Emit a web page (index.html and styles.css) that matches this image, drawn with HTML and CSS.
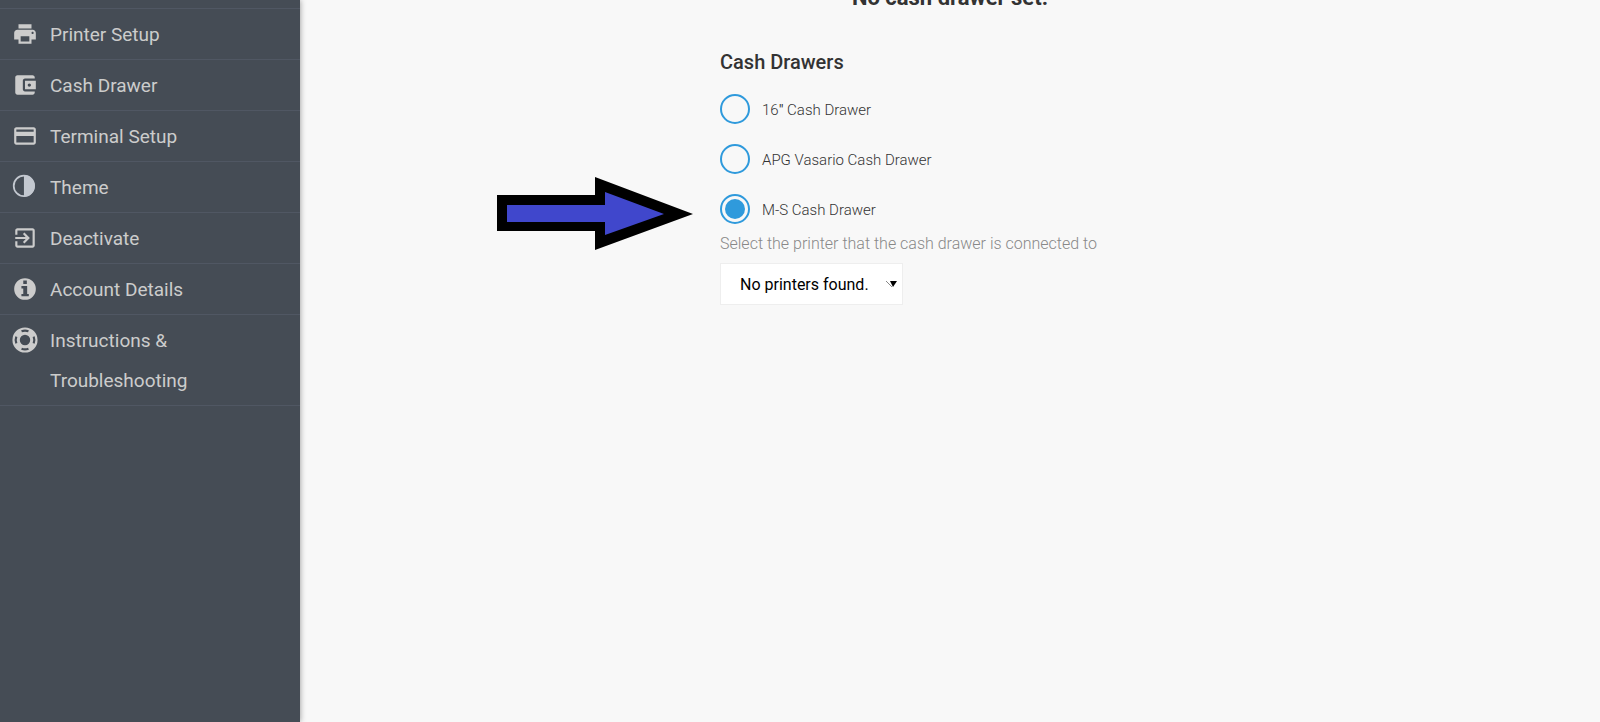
FILE: index.html
```
<!DOCTYPE html>
<html lang="en">
<head>
<meta charset="utf-8">
<title>Cash Drawer</title>
<link rel="stylesheet" href="styles.css">
</head>
<body>
<div class="app">
  <nav class="sidebar">
    <ul class="menu">
      <li><a class="menu-link" href="#printer">
        <svg class="icon" viewBox="0 0 24 24"><path d="M19 8H5c-1.660 0-3 1.340-3 3v6h4v4h12v-4h4v-6c0-1.660-1.340-3-3-3zm-3 11H8v-5h8v5zm3-7c-.55 0-1-.45-1-1s.45-1 1-1 1 .45 1 1-.45 1-1 1zm-1-9H6v4h12V3z"/></svg>
        <span>Printer Setup</span></a></li>
      <li><a class="menu-link" href="#drawer">
        <svg class="icon" viewBox="0 0 24 24"><path d="M21 18v1c0 1.100-.9 2-2 2H5c-1.110 0-2-.9-2-2V5c0-1.100.89-2 2-2h14c1.100 0 2 .9 2 2v1h-9c-1.110 0-2 .9-2 2v8c0 1.100.89 2 2 2h9zm-9-2h10V8H12v8zm4-2.500c-.83 0-1.500-.67-1.500-1.500s.67-1.500 1.500-1.500 1.500.67 1.500 1.500-.67 1.500-1.500 1.500z"/></svg>
        <span>Cash Drawer</span></a></li>
      <li><a class="menu-link" href="#terminal">
        <svg class="icon" viewBox="0 0 24 24"><path d="M20 4H4c-1.110 0-1.990.89-1.990 2L2 18c0 1.110.89 2 2 2h16c1.110 0 2-.89 2-2V6c0-1.110-.89-2-2-2zm0 14H4v-6h16v6zm0-10H4V6h16v2z"/></svg>
        <span>Terminal Setup</span></a></li>
      <li><a class="menu-link" href="#theme">
        <svg class="icon icon-theme" viewBox="0 0 24 24"><circle cx="11" cy="11" r="9.400" fill="none" stroke="currentColor" stroke-width="1.600"/><path d="M11 1a10 10 0 0 1 0 20z"/></svg>
        <span>Theme</span></a></li>
      <li><a class="menu-link" href="#deactivate">
        <svg class="icon" viewBox="0 0 24 24"><path d="M10.090 15.590L11.500 17l5-5-5-5-1.410 1.410L12.670 11H3v2h9.670l-2.580 2.590zM19 3H5c-1.110 0-2 .9-2 2v4h2V5h14v14H5v-4H3v4c0 1.100.89 2 2 2h14c1.100 0 2-.9 2-2V5c0-1.100-.9-2-2-2z"/></svg>
        <span>Deactivate</span></a></li>
      <li><a class="menu-link" href="#account">
        <svg class="icon" viewBox="0 0 24 24"><path fill-rule="evenodd" d="M12 2a10 10 0 1 0 0 20a10 10 0 0 0 0-20zM10.400 4.200h3.300v3.200h-3.300zM8.700 9.300H14v7.300h1.500v2.200H8.700v-2.200h1.700v-5H8.700z"/></svg>
        <span>Account Details</span></a></li>
      <li><a class="menu-link" href="#help">
        <svg class="icon" viewBox="0 0 24 24"><circle cx="12" cy="12" r="8.200" fill="none" stroke="currentColor" stroke-width="6.800"/><g class="ring-gap"><path d="M8.800 4a8.600 8.600 0 0 1 6.400 0M8.800 20a8.600 8.600 0 0 0 6.400 0M4 8.800a8.600 8.600 0 0 0 0 6.400M20 8.800a8.600 8.600 0 0 1 0 6.400"/></g></svg>
        <span>Instructions &amp; Troubleshooting</span></a></li>
    </ul>
  </nav>
  <main class="content">
    <h1 class="status">No cash drawer set.</h1>
    <form class="drawer-form">
      <svg class="pointer" viewBox="0 0 196 74" aria-hidden="true"><path d="M0 18H98V0L196 37L98 73V54H0z"/><path class="pointer-fill" d="M10 28H108V15L167 37L108 58V45H10z"/></svg>
      <fieldset class="drawers">
        <legend class="title">Cash Drawers</legend>
        <label class="option"><input class="radio" type="radio" name="drawer"><span class="option-text">16<b>″</b> Cash Drawer</span></label>
        <label class="option"><input class="radio" type="radio" name="drawer"><span class="option-text">APG Vasario Cash Drawer</span></label>
        <label class="option"><input class="radio" type="radio" name="drawer" checked><span class="option-text">M-S Cash Drawer</span></label>
      </fieldset>
      <label class="hint" for="printer-select">Select the printer that the cash drawer is connected to</label>
      <div class="select-wrap">
        <select class="select" id="printer-select"><option>No printers found.</option></select>
        <svg class="caret" viewBox="0 0 12 7" aria-hidden="true"><path class="caret-line" d="M0 0L6 6"/><path d="M4 0H11L7 6z"/></svg>
      </div>
    </form>
  </main>
</div>
</body>
</html>
```
FILE: styles.css
```
* { box-sizing: border-box; }

body {
  margin: 0;
  background: #f8f8f8;
  color: #333;
  font-family: Roboto, "Liberation Sans", sans-serif;
  overflow: hidden;
}

.app {
  display: flex;
  min-height: 100vh;
}

.sidebar {
  flex: 0 0 300px;
  padding-top: 8px;
  background: #454c55;
  box-shadow: 0 0 6px rgba(0, 0, 0, 0.4);
}

.menu {
  margin: 0;
  padding: 0;
  list-style: none;
  border-top: 1px solid #505763;
}

.menu-link {
  display: flex;
  gap: 12px;
  padding: 6px 80px 4px 12px;
  border-bottom: 1px solid #505763;
  color: #ccc;
  font-size: 19px;
  line-height: 40px;
  text-decoration: none;
}

.icon {
  flex: none;
  width: 26px;
  height: 26px;
  margin-top: 6px;
  fill: currentColor;
}

.icon-theme { color: #c3c8d0; }

.ring-gap {
  fill: none;
  stroke: #454c55;
  stroke-width: 2;
}

.content {
  flex: 1;
  display: flex;
  flex-direction: column;
  align-items: center;
}

.status {
  margin: -15px 0 0;
  font-size: 22px;
  line-height: 25px;
}

.drawer-form {
  position: relative;
  width: 460px;
  margin-top: 40px;
}

.pointer {
  position: absolute;
  top: 127px;
  right: calc(100% + 27px);
  width: 196px;
}

.pointer-fill { fill: #4047cc; }

.drawers {
  display: flex;
  flex-direction: column;
  gap: 20px;
  margin: 0;
  padding: 0;
  border: 0;
}

.title {
  margin-bottom: 20px;
  padding: 0;
  font-size: 20px;
  font-weight: 500;
  line-height: 24px;
}

.option {
  display: flex;
  align-items: center;
  gap: 12px;
  font-size: 15px;
  font-weight: 300;
}

.option-text { padding-top: 2px; }

.radio {
  appearance: none;
  width: 30px;
  height: 30px;
  margin: 0;
  border: 2px solid #2f9adc;
  border-radius: 50%;
}

.radio:checked {
  padding: 3px;
  background: #2f9adc content-box;
}

.hint {
  display: block;
  margin-top: 8px;
  color: #888;
  font-size: 16px;
  font-weight: 300;
  line-height: 24px;
}

.select-wrap {
  position: relative;
  width: 183px;
  margin-top: 7px;
}

.select {
  appearance: none;
  width: 100%;
  height: 42px;
  padding: 0 19px;
  border: 1px solid #eee;
  border-radius: 0;
  background: #fff;
  color: #000;
  font-family: inherit;
  font-size: 16px;
}

.caret {
  position: absolute;
  top: 18px;
  right: 5px;
  width: 12px;
  pointer-events: none;
}

.caret-line { stroke: #888; }
```
